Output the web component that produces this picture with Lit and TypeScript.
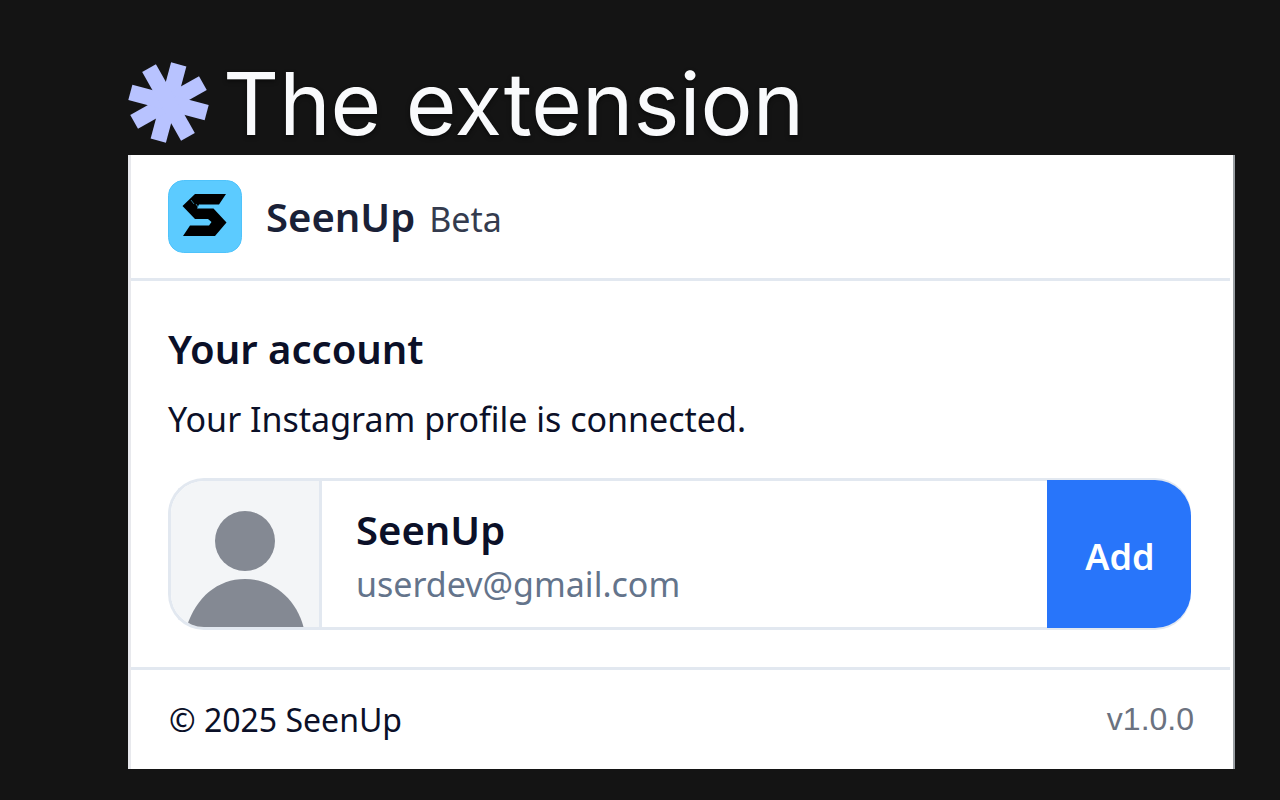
import { LitElement, html, svg, css } from "lit";
import { customElement, property } from "lit/decorators.js";

@customElement("star-mark")
class StarMark extends LitElement {
  static styles = css`
    :host { display: block; flex: none; }
    svg { display: block; width: 81px; height: 81px; }
  `;
  render() {
    return html`<svg viewBox="-41 -41 82 82" fill="#b8c3ff" aria-hidden="true">
      ${[15, 60.5, 105, 150.5].map(
        (a) => svg`<rect x="-8" y="-40" width="16" height="80" transform="rotate(${a})" />`
      )}
    </svg>`;
  }
}

@customElement("account-row")
class AccountRow extends LitElement {
  @property() name = "";
  @property() email = "";
  static styles = css`
    :host { display: block; }
    .row {
      display: flex;
      height: 152px;
      box-sizing: border-box;
      border: 3px solid #e2e8f0;
      border-right: 0;
      border-radius: 36px;
      background: #fff;
    }
    .avatar {
      flex: none;
      width: 148px;
      border-right: 3px solid #e2e8f0;
      background: #f3f5f7;
      border-radius: 33px 0 0 33px;
      overflow: hidden;
    }
    .avatar svg { display: block; width: 148px; height: 146px; }
    .who {
      flex: 1;
      min-width: 0;
      padding: 6px 34px 0;
      display: flex;
      flex-direction: column;
      justify-content: center;
    }
    .name { font-size: 40px; line-height: 54px; font-weight: 600; color: #0b1028; }
    .email { font-size: 34px; line-height: 54px; color: #64748b; }
    button {
      flex: none;
      width: 144px;
      margin: -1px 0;
      padding: 6px 0 0 2px;
      border: 0;
      border-radius: 0 36px 36px 0;
      background: #2875fa;
      color: #fff;
      font: 600 36px/48px "Noto Sans", "Open Sans", sans-serif;
    }
  `;
  render() {
    return html`<div class="row">
      <div class="avatar">
        <svg viewBox="0 0 148 146" fill="#848993" role="img" aria-label="Profile picture">
          <circle cx="74" cy="60" r="30" />
          <path d="M15 148C24 117 46 98 74 98S126 118 133 148Z" />
        </svg>
      </div>
      <div class="who">
        <div class="name">${this.name}</div>
        <div class="email">${this.email}</div>
      </div>
      <button type="button">Add</button>
    </div>`;
  }
}

@customElement("app-root")
class AppRoot extends LitElement {
  static styles = css`
    :host {
      display: block;
      min-height: 100vh;
      box-sizing: border-box;
      padding: 50px 45px 31px 128px;
      background: #141414;
      font-family: "Noto Sans", "Open Sans", sans-serif;
      color: #0b1028;
    }
    .title { display: flex; align-items: center; gap: 14px; height: 105px; }
    h1 {
      margin: 0;
      padding-top: 2px;
      font: 400 87px/106px Inter, sans-serif;
      color: #f9fafc;
      text-shadow: 0 2px 4px rgba(0, 0, 0, 0.5);
      white-space: nowrap;
    }
    .card {
      background: #fff;
      border-left: 3px solid #e8e9ed;
      border-right: 2px solid #9a9fa3;
    }
    header {
      display: flex;
      align-items: center;
      gap: 24px;
      padding: 25px 37px;
      margin-right: 3px;
      border-bottom: 3px solid #e2e8f0;
    }
    .logo { display: block; width: 74px; height: 73px; flex: none; }
    .brand { display: flex; align-items: baseline; gap: 14px; }
    .brand b { font-size: 40px; line-height: 54px; font-weight: 600; color: #1a2137; }
    .brand span { font-size: 34px; color: #343b4e; }
    main { padding: 41px 42px 37px 37px; }
    h2 { margin: 0; font-size: 40px; line-height: 54px; font-weight: 600; }
    p { margin: 16px 0 32px; font-size: 34px; line-height: 54px; }
    footer {
      display: flex;
      justify-content: space-between;
      align-items: center;
      padding: 24px 36px 24px 38px;
      margin-right: 3px;
      border-top: 3px solid #e2e8f0;
      font-size: 32px;
      line-height: 51px;
    }
    .version { font-family: "Liberation Sans", sans-serif; color: #6b7280; }
  `;
  render() {
    return html`
      <div class="title">
        <star-mark></star-mark>
        <h1>The extension</h1>
      </div>
      <div class="card">
        <header>
          <svg class="logo" viewBox="168 180 74 73" role="img" aria-label="SeenUp logo">
            <rect x="168.5" y="180.5" width="73" height="72" rx="15" fill="#5ccbff" stroke="#4fc3fb" />
            <path d="M195 194H226L219 204.500H199L197 208.500H213.500L226.500 222.500L215 236H183L190 225.500H209L211.500 222L208 219H195L182.500 206Z" fill="#000" />
            <path d="M191 200L194 204M196 204L198 207" stroke="#2b7898" stroke-width="1" />
          </svg>
          <div class="brand"><b>SeenUp</b><span>Beta</span></div>
        </header>
        <main>
          <h2>Your account</h2>
          <p>Your Instagram profile is connected.</p>
          <account-row name="SeenUp" email="userdev@gmail.com"></account-row>
        </main>
        <footer>
          <span>© 2025 SeenUp</span>
          <span class="version">v1.0.0</span>
        </footer>
      </div>
    `;
  }
}
